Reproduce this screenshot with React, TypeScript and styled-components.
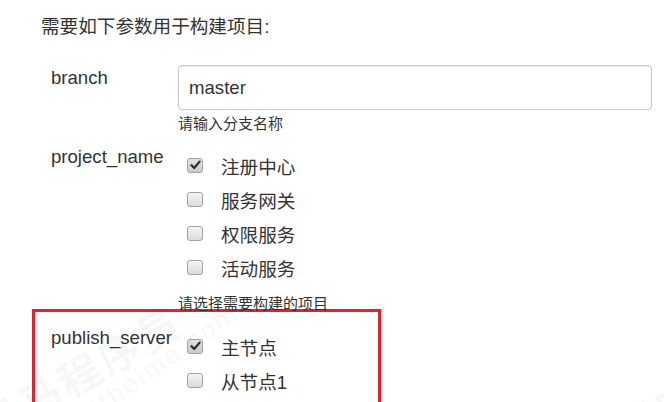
import React from "react";
import styled, { createGlobalStyle } from "styled-components";

const GlobalStyle = createGlobalStyle`
  html, body {
    margin: 0;
    padding: 0;
    background: #ffffff;
  }
`;

const Page = styled.div`
  position: relative;
  width: 664px;
  height: 402px;
  overflow: hidden;
  padding-top: 15px;
  box-sizing: border-box;
  font-family: "Liberation Sans", "Noto Sans CJK SC", Arial, sans-serif;
  color: #333333;
  background: #ffffff;
`;

const Heading = styled.h3`
  margin: 0 0 0 41px;
  font-size: 18.6px;
  line-height: 24px;
  font-weight: normal;
`;

const Params = styled.div`
  margin-top: 26px;
`;

const ParamRow = styled.div<{ first?: boolean }>`
  display: grid;
  grid-template-columns: 127px 474px;
  padding-left: 51px;
  margin-top: ${({ first }) => (first ? "0" : "10px")};
`;

const Highlight = styled.div`
  margin: -5px 0 0 32px;
  width: 349px;
  box-sizing: border-box;
  border: 3px solid #e8202a;
  border-bottom: none;
  padding: 13px 0 0 16px;
  height: 120px;

  ${ParamRow} {
    padding-left: 0;
    margin-top: 0;
    grid-template-columns: 127px 1fr;
  }
`;

const Label = styled.div`
  font-size: 18.6px;
  line-height: 24px;
  padding-top: 1px;
  white-space: nowrap;
`;

const Control = styled.div`
  display: flex;
  flex-direction: column;
`;

const TextInput = styled.input`
  width: 474px;
  height: 45px;
  box-sizing: border-box;
  border: 1px solid #c6c6c6;
  border-radius: 4px;
  box-shadow: inset 0 1px 1px rgba(0, 0, 0, 0.08);
  padding: 0 10px;
  font-family: inherit;
  font-size: 18.6px;
  color: #333333;
  outline: none;
`;

const Hint = styled.div<{ gap?: number }>`
  margin-top: ${({ gap }) => gap ?? 4}px;
  font-size: 15px;
  line-height: 20px;
  white-space: nowrap;
`;

const Options = styled.div`
  padding-top: 4px;
`;

const Option = styled.label`
  display: flex;
  align-items: center;
  height: 34px;
  padding-left: 9px;
  gap: 18px;
  font-size: 18.6px;
  white-space: nowrap;
`;

const Box = styled.span<{ checked?: boolean }>`
  display: inline-flex;
  align-items: center;
  justify-content: center;
  width: 16px;
  height: 15px;
  box-sizing: border-box;
  border: 1px solid #a2a2a2;
  border-radius: 3px;
  background: ${({ checked }) =>
    checked
      ? "linear-gradient(#e2e2e2, #cbcbcb)"
      : "linear-gradient(#f4f4f4, #dbdbdb)"};
`;

const Watermark = styled.div<{ size: number; weight?: number; angle?: number }>`
  position: absolute;
  font-size: ${({ size }) => size}px;
  font-weight: ${({ weight }) => weight ?? 400};
  color: rgba(0, 0, 0, 0.05);
  white-space: nowrap;
  transform-origin: left center;
  transform: rotate(${({ angle }) => angle ?? -35}deg);
  pointer-events: none;
  letter-spacing: 3px;
`;

const Checkbox = ({ checked }: { checked?: boolean }) => (
  <Box checked={checked}>
    {checked && (
      <svg width="11" height="10" viewBox="0 0 11 10">
        <path
          d="M1.5 5.2 L4.2 8 L9.6 1.6"
          fill="none"
          stroke="#2b2b2b"
          strokeWidth="2.2"
          strokeLinecap="round"
          strokeLinejoin="round"
        />
      </svg>
    )}
  </Box>
);

const projects = [
  { name: "注册中心", checked: true },
  { name: "服务网关" },
  { name: "权限服务" },
  { name: "活动服务" },
];

const servers = [{ name: "主节点", checked: true }, { name: "从节点1" }];

const App = () => (
  <Page>
    <GlobalStyle />
    <Heading>需要如下参数用于构建项目:</Heading>
    <Params>
      <ParamRow first>
        <Label>branch</Label>
        <Control>
          <TextInput defaultValue="master" />
          <Hint>请输入分支名称</Hint>
        </Control>
      </ParamRow>
      <ParamRow>
        <Label>project_name</Label>
        <Control>
          <Options>
            {projects.map((p) => (
              <Option key={p.name}>
                <Checkbox checked={p.checked} />
                {p.name}
              </Option>
            ))}
          </Options>
          <Hint gap={10}>请选择需要构建的项目</Hint>
        </Control>
      </ParamRow>
      <Highlight>
        <ParamRow>
          <Label>publish_server</Label>
          <Control>
            <Options>
              {servers.map((s) => (
                <Option key={s.name}>
                  <Checkbox checked={s.checked} />
                  {s.name}
                </Option>
              ))}
            </Options>
            <Hint gap={7}>请选择需要发布的服务器</Hint>
          </Control>
        </ParamRow>
      </Highlight>
    </Params>
    <Watermark size={42} weight={700} angle={-30} style={{ left: -18, top: 398 }}>
      黑马程序员
    </Watermark>
    <Watermark size={26} style={{ left: 94, top: 394 }}>
      itheima.com
    </Watermark>
    <Watermark size={42} weight={700} angle={-30} style={{ left: 540, top: 448 }}>
      黑马程序员
    </Watermark>
  </Page>
);

export default App;
